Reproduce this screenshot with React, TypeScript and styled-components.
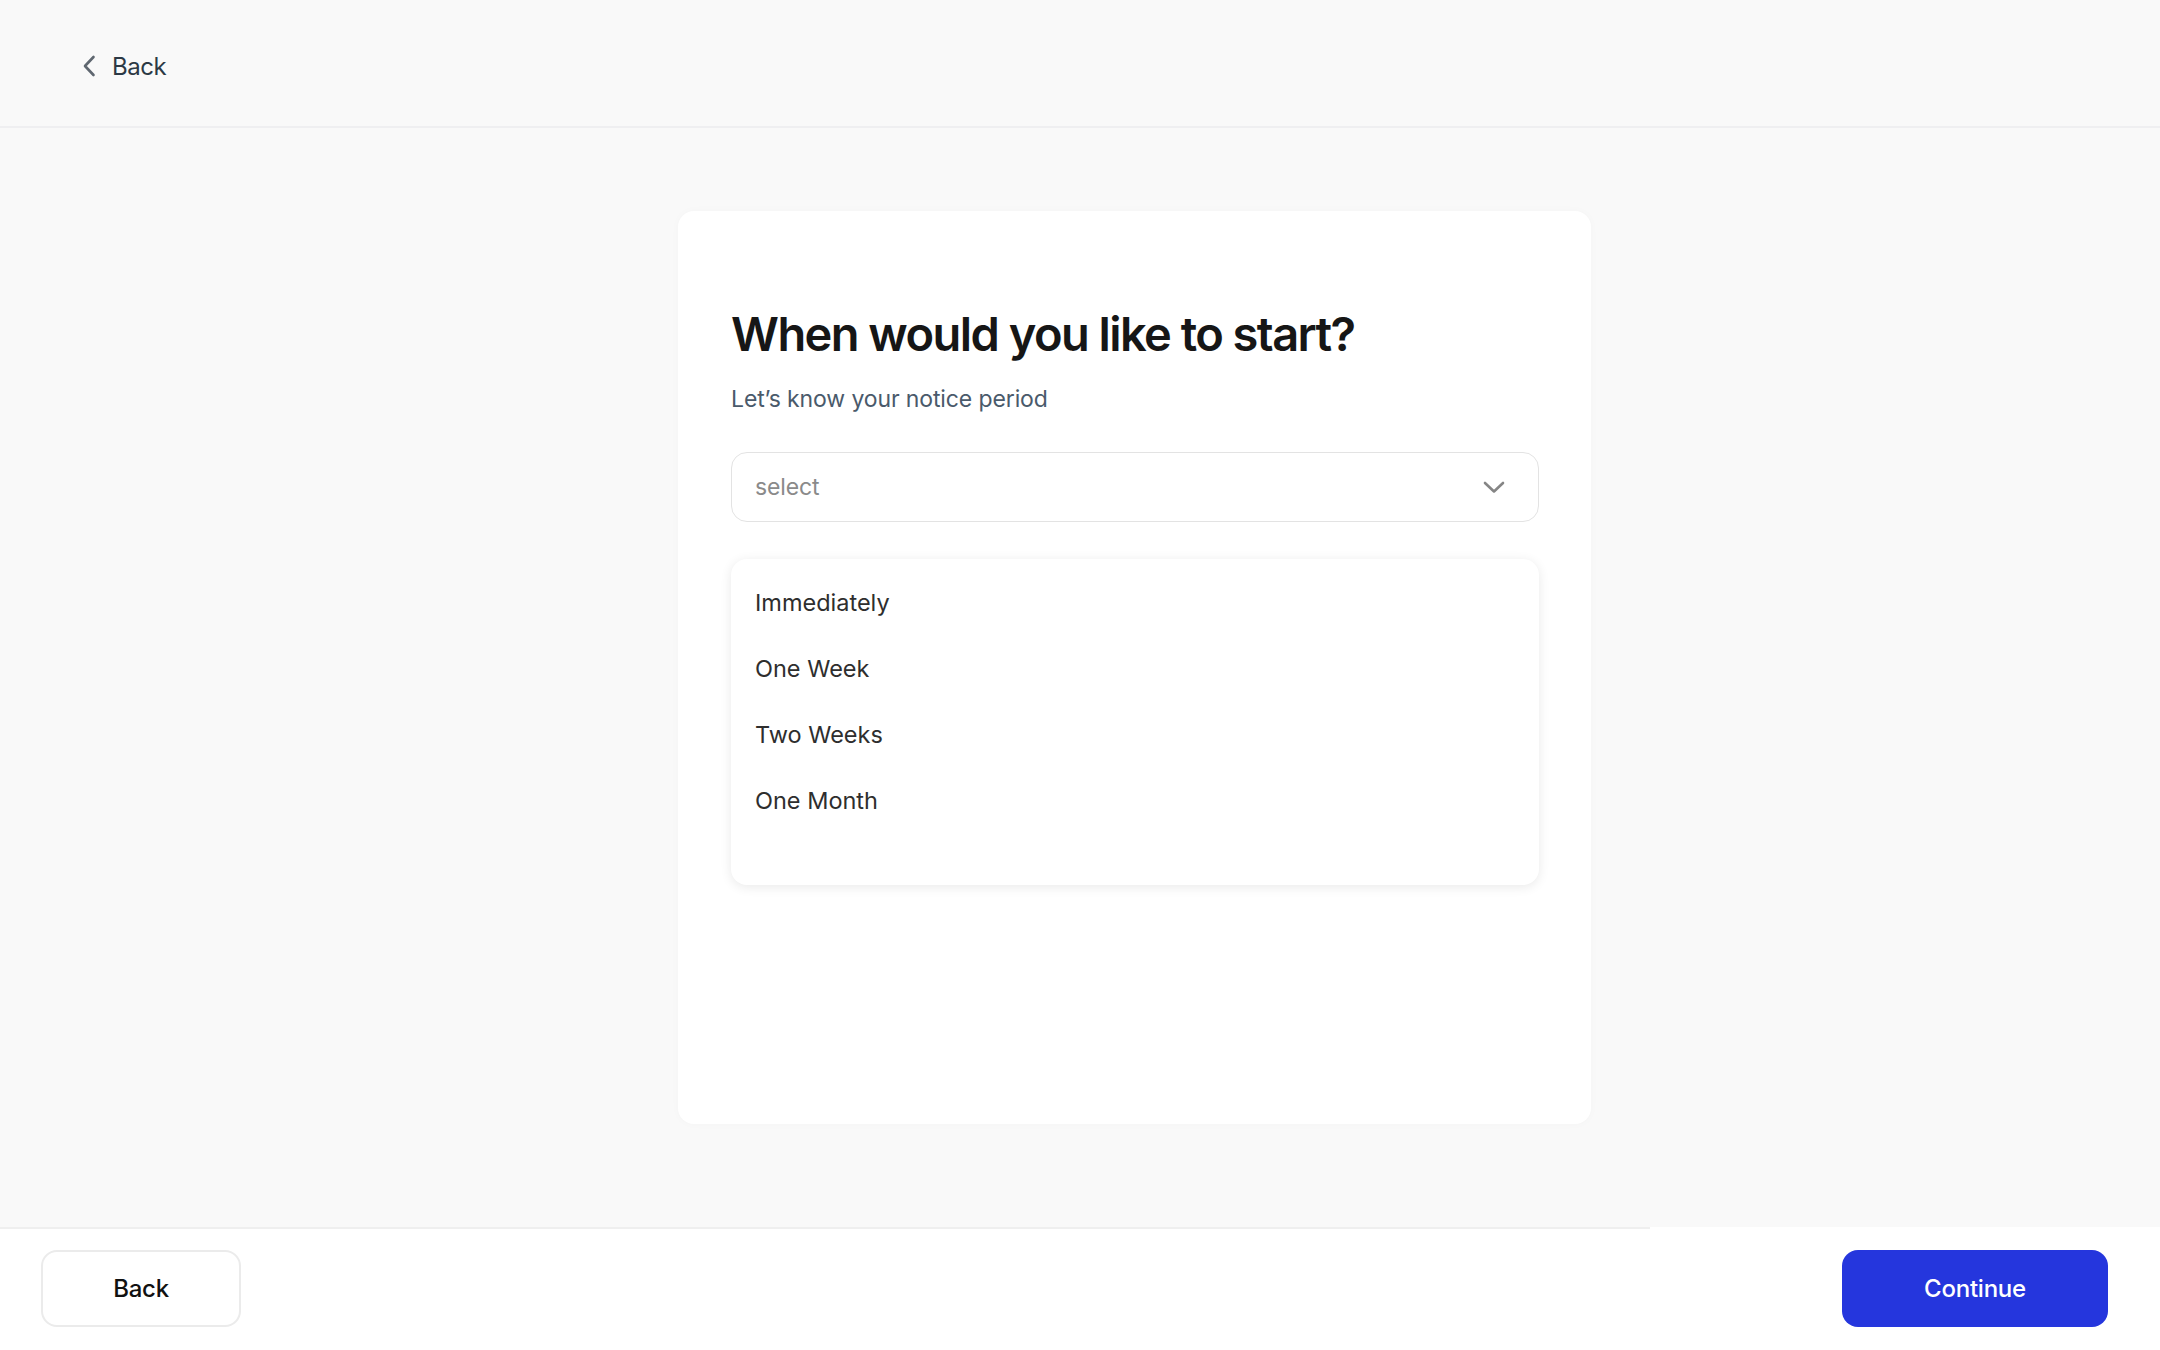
import React from "react";
import styled, { createGlobalStyle } from "styled-components";

const GlobalStyle = createGlobalStyle`
  html, body {
    margin: 0;
    padding: 0;
    background: #f9f9f9;
    font-family: Inter, "Noto Sans", Arial, sans-serif;
    -webkit-font-smoothing: antialiased;
  }
  * { box-sizing: border-box; }
`;

const Page = styled.div`
  height: 1350px;
  display: flex;
  flex-direction: column;
  background: #f9f9f9;
  overflow: hidden;
`;

const Header = styled.header`
  height: 128px;
  flex-shrink: 0;
  display: flex;
  align-items: center;
  padding: 6px 0 0 82px;
  border-bottom: 2px solid #efeff1;
`;

const BackLink = styled.a`
  display: flex;
  align-items: center;
  gap: 16px;
  color: #2c3945;
  font-size: 24px;
  font-weight: 400;
  text-decoration: none;
  letter-spacing: -0.02em;
  cursor: pointer;
`;

const Main = styled.main`
  flex: 1;
  display: flex;
  align-items: flex-start;
  padding-top: 83px;
  padding-left: 678px;
`;

const Card = styled.section`
  width: 913px;
  height: 913px;
  background: #ffffff;
  border-radius: 16px;
  box-shadow: 0 0 10px rgba(0, 0, 0, 0.025);
  padding: 95px 52px 0 53px;
  display: flex;
  flex-direction: column;
`;

const Title = styled.h1`
  margin: 0;
  font-size: 47px;
  line-height: 56px;
  font-weight: 600;
  color: #161616;
  letter-spacing: -0.033em;
`;

const Subtitle = styled.p`
  margin: 21px 0 0;
  font-size: 23px;
  line-height: 32px;
  color: #4a5a6b;
  letter-spacing: -0.005em;
`;

const SelectBox = styled.div`
  margin-top: 37px;
  height: 70px;
  border: 1.5px solid #e3e3e3;
  border-radius: 16px;
  display: flex;
  align-items: center;
  justify-content: space-between;
  padding: 0 33px 0 23px;
  background: #fff;
`;

const Placeholder = styled.span`
  font-size: 23px;
  color: #8a8a8a;
  letter-spacing: -0.005em;
`;

const Dropdown = styled.ul`
  list-style: none;
  margin: 37px 0 0;
  height: 326px;
  padding: 10.5px 0 0;
  background: #fff;
  border-radius: 16px;
  box-shadow: 0 2px 12px rgba(0, 0, 0, 0.09);
`;

const Option = styled.li`
  height: 66px;
  line-height: 66px;
  padding-left: 24px;
  font-size: 23.5px;
  font-weight: 400;
  color: #2e2e2e;
  letter-spacing: 0;
  cursor: pointer;
`;

const Footer = styled.footer`
  height: 123px;
  flex-shrink: 0;
  background: #ffffff;
  display: flex;
  flex-direction: column;
`;

const FooterRule = styled.div`
  width: 1650px;
  height: 2px;
  background: #efefef;
`;

const FooterBar = styled.div`
  display: flex;
  justify-content: space-between;
  align-items: center;
  padding: 21px 52px 0 41px;
`;

const Button = styled.button<{ $primary?: boolean }>`
  height: 77px;
  width: ${(p) => (p.$primary ? "266px" : "200px")};
  border-radius: 16px;
  border: ${(p) => (p.$primary ? "none" : "2px solid #ebebeb")};
  background: ${(p) => (p.$primary ? "#2536dd" : "#ffffff")};
  color: ${(p) => (p.$primary ? "#ffffff" : "#111111")};
  font-family: Inter, "Noto Sans", Arial, sans-serif;
  font-size: 24px;
  font-weight: 500;
  letter-spacing: -0.01em;
  cursor: pointer;
`;

const options = ["Immediately", "One Week", "Two Weeks", "One Month"];

export default function App() {
  return (
    <>
      <GlobalStyle />
      <Page>
        <Header>
          <BackLink>
            <svg width="14" height="22" viewBox="0 0 14 22" fill="none">
              <path
                d="M11.5 2 L3 11 L11.5 20"
                stroke="#5f6770"
                strokeWidth="2.6"
                strokeLinecap="round"
                strokeLinejoin="round"
              />
            </svg>
            Back
          </BackLink>
        </Header>
        <Main>
          <Card>
            <Title>When would you like to start?</Title>
            <Subtitle>Let’s know your notice period</Subtitle>
            <SelectBox>
              <Placeholder>select</Placeholder>
              <svg width="22" height="13" viewBox="0 0 22 13" fill="none">
                <path
                  d="M2 2 L11 10.5 L20 2"
                  stroke="#858585"
                  strokeWidth="2.6"
                  strokeLinecap="round"
                  strokeLinejoin="round"
                />
              </svg>
            </SelectBox>
            <Dropdown>
              {options.map((o) => (
                <Option key={o}>{o}</Option>
              ))}
            </Dropdown>
          </Card>
        </Main>
        <Footer>
          <FooterRule />
          <FooterBar>
            <Button>Back</Button>
            <Button $primary>Continue</Button>
          </FooterBar>
        </Footer>
      </Page>
    </>
  );
}
